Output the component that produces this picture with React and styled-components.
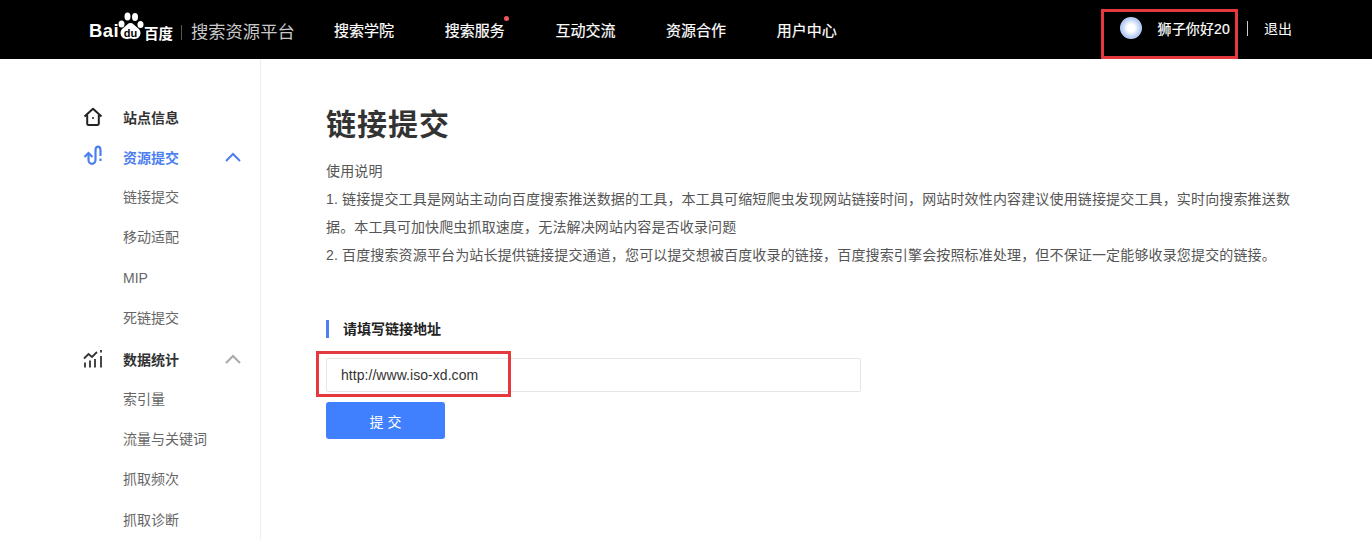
import React from 'react';
import styled, { createGlobalStyle } from 'styled-components';

const CJK = `"Liberation Sans", "Noto Sans CJK SC", sans-serif`;

const navItems = [
  { label: '搜索学院' },
  { label: '搜索服务', dot: true },
  { label: '互动交流' },
  { label: '资源合作' },
  { label: '用户中心' },
];

const App = () => {
  return (
    <>
      <GlobalStyle />
      <Header>
        <Logo>
          <LogoBai>Bai</LogoBai>
          <PawIcon />
          <LogoBaidu>百度</LogoBaidu>
          <LogoLine />
          <LogoTitle>搜索资源平台</LogoTitle>
        </Logo>
        <Nav>
          {navItems.map((item) => (
            <NavItem key={item.label}>
              {item.label}
              {item.dot && <NavDot />}
            </NavItem>
          ))}
        </Nav>
        <UserArea>
          <Marked $inset="-8px -8px -20px -19px">
            <Avatar />
            <UserName>狮子你好20</UserName>
          </Marked>
          <Divider />
          <Logout>退出</Logout>
        </UserArea>
      </Header>
      <Body>
        <Sidebar>
          <MenuHead>
            <MenuIcon><HomeIcon /></MenuIcon>
            站点信息
          </MenuHead>
          <MenuHead $active>
            <MenuIcon><SubmitIcon /></MenuIcon>
            资源提交
            <Chevron $color="#4e7ff0" />
          </MenuHead>
          <MenuItem>链接提交</MenuItem>
          <MenuItem>移动适配</MenuItem>
          <MenuItem>MIP</MenuItem>
          <MenuItem>死链提交</MenuItem>
          <MenuHead>
            <MenuIcon><StatsIcon /></MenuIcon>
            数据统计
            <Chevron $color="#aaa" />
          </MenuHead>
          <MenuItem>索引量</MenuItem>
          <MenuItem>流量与关键词</MenuItem>
          <MenuItem>抓取频次</MenuItem>
          <MenuItem>抓取诊断</MenuItem>
        </Sidebar>
        <Main>
          <Title>链接提交</Title>
          <Notes>
            <p>使用说明</p>
            <p>1. 链接提交工具是网站主动向百度搜索推送数据的工具，本工具可缩短爬虫发现网站链接时间，网站时效性内容建议使用链接提交工具，实时向搜索推送数据。本工具可加快爬虫抓取速度，无法解决网站内容是否收录问题</p>
            <p>2. 百度搜索资源平台为站长提供链接提交通道，您可以提交想被百度收录的链接，百度搜索引擎会按照标准处理，但不保证一定能够收录您提交的链接。</p>
          </Notes>
          <SectionTitle>请填写链接地址</SectionTitle>
          <InputRow $inset="-7px auto -5px -10px" $width="195px">
            <InputBox>
              <InputText>http://www.iso-xd.com</InputText>
            </InputBox>
          </InputRow>
          <SubmitButton>提 交</SubmitButton>
        </Main>
      </Body>
    </>
  );
};

export default App;

const PawIcon = () => (
  <PawSvg width="27" height="28" viewBox="0 0 27 28" fill="#fff">
    <ellipse cx="4.500" cy="12" rx="3" ry="3.600" />
    <ellipse cx="10.500" cy="4.500" rx="3" ry="4" />
    <ellipse cx="18" cy="5" rx="3" ry="4" />
    <ellipse cx="23.500" cy="12.500" rx="3" ry="3.600" />
    <path d="M13.500 11c-2.500 0-3.500 2-5.500 3.500-2.500 1.800-4.500 3.700-4.500 6.500 0 3 2.500 6 6 6 1.800 0 2.500-.5 4-.5s2.200.5 4 .5c3.500 0 6-3 6-6 0-2.800-2-4.700-4.500-6.500-2-1.500-3-3.500-5.500-3.500z" />
    <PawText x="13.500" y="24.500" textAnchor="middle">du</PawText>
  </PawSvg>
);

const HomeIcon = () => (
  <svg width="20" height="20" viewBox="0 0 20 20" fill="none" stroke="#222" strokeWidth="2">
    <path d="M1.500 9.500 10 1.800l8.500 7.700" strokeLinejoin="round" />
    <path d="M4.200 8v8.500a1.500 1.500 0 0 0 1.500 1.500h8.600a1.500 1.500 0 0 0 1.500-1.500V8" />
    <path d="M9 11h2" strokeWidth="1.600" />
  </svg>
);

const SubmitIcon = () => (
  <ShiftedSvg width="20" height="20" viewBox="0 0 20 20" fill="none" stroke="#4e7ff0" strokeWidth="2.200">
    <path d="M1.500 12 5.500 8l4 4" />
    <path d="M5.500 8.500v6.500a3.500 3.800 0 0 0 7 0V5.500a2.500 3.800 0 0 1 5 0v5.500" />
    <path d="M17.500 13.500v2.500" />
  </ShiftedSvg>
);

const StatsIcon = () => (
  <svg width="20" height="20" viewBox="0 0 20 20" fill="none" stroke="#333" strokeWidth="1.800">
    <path d="M1 9.500 5.500 5l3.500 3L14 3" />
    <path d="M2 13.500v5M7 11.500v7M12 10v8.500M18 7v11.500" />
    <path d="M18 1v2.500" />
  </svg>
);

const Chevron = ({ $color }) => (
  <ChevronSvg width="16" height="10" viewBox="0 0 16 10" fill="none" stroke={$color} strokeWidth="2">
    <path d="M1 9 8 2l7 7" />
  </ChevronSvg>
);

const GlobalStyle = createGlobalStyle`
  html, body {
    margin: 0;
    padding: 0;
    height: 540px;
    overflow: hidden;
    background: #fff;
    font-family: ${CJK};
  }
  * {
    box-sizing: border-box;
  }
`;

const Header = styled.header`
  display: flex;
  align-items: center;
  height: 59px;
  padding: 0 80px 0 89px;
  background: #000;
  color: #fff;
`;

const Logo = styled.div`
  display: flex;
  align-items: center;
  width: 245px;
  margin-bottom: 1px;
`;

const LogoBai = styled.span`
  width: 28px;
  font-size: 18.500px;
  letter-spacing: 0.400px;
  font-weight: 700;
  margin-top: 4px;
`;

const PawSvg = styled.svg`
  margin-bottom: 6px;
`;

const PawText = styled.text`
  font-size: 11px;
  font-weight: 700;
  fill: #000;
  font-family: "Liberation Sans", sans-serif;
`;

const LogoBaidu = styled.span`
  font-size: 14.500px;
  font-weight: 700;
  margin-top: 6px;
`;

const LogoLine = styled.span`
  width: 1px;
  height: 15px;
  margin: 6px 9px 0 8px;
  background: #555;
`;

const LogoTitle = styled.span`
  font-size: 17.300px;
  margin-top: 2px;
  color: #c8c8c8;
`;

const Nav = styled.nav`
  display: flex;
  gap: 50.700px;
`;

const NavItem = styled.a`
  position: relative;
  font-size: 15px;
  line-height: 20px;
  margin-top: 2px;
  -webkit-text-stroke: 0.200px #fff;
`;

const NavDot = styled.span`
  position: absolute;
  top: -5px;
  right: -4px;
  width: 5px;
  height: 5px;
  border-radius: 50%;
  background: #f0565c;
`;

const UserArea = styled.div`
  display: flex;
  align-items: center;
  margin-left: auto;
  margin-bottom: 4px;
  font-size: 14px;
`;

const Marked = styled.div`
  position: relative;
  display: flex;
  align-items: center;

  &::after {
    content: '';
    box-sizing: border-box;
    position: absolute;
    inset: ${(p) => p.$inset};
    width: ${(p) => p.$width || 'auto'};
    border: 3px solid #e5383f;
    pointer-events: none;
  }
`;

const InputRow = styled(Marked)`
  margin-top: 20px;
`;

const Avatar = styled.span`
  width: 22px;
  height: 22px;
  border-radius: 50%;
  background: radial-gradient(circle at 50% 50%, #fff 0 24%, #b7cdf5 60%, #a9c2f0 100%);
`;

const UserName = styled.span`
  margin-left: 16px;
  letter-spacing: 0.150px;
  -webkit-text-stroke: 0.200px #fff;
`;

const Divider = styled.span`
  width: 1px;
  height: 15px;
  margin: 2px 16px 0 17px;
  background: #ccc;
`;

const Logout = styled.a`
  font-size: 14px;
`;

const Body = styled.div`
  display: flex;
  height: 481px;
  overflow: hidden;
`;

const Sidebar = styled.aside`
  width: 261px;
  flex-shrink: 0;
  padding: 38px 0 0 83px;
  border-right: 1px solid #eceff3;
`;

const MenuHead = styled.div`
  display: flex;
  align-items: center;
  height: 40px;
  font-size: 14px;
  font-weight: 700;
  color: ${(p) => (p.$active ? '#4e7ff0' : '#333')};
`;

const MenuIcon = styled.span`
  display: flex;
  width: 40px;
`;

const ShiftedSvg = styled.svg`
  margin-top: -4px;
`;

const ChevronSvg = styled.svg`
  margin-left: 46px;
`;

const MenuItem = styled.div`
  height: 40.400px;
  line-height: 40px;
  padding-left: 40px;
  font-size: 14px;
  color: #666;
`;

const Main = styled.main`
  flex: 1;
  padding: 0 80px 0 65px;
`;

const Title = styled.h1`
  margin: 46px 0 0;
  font-size: 30px;
  line-height: 40px;
  letter-spacing: 1px;
  font-weight: 700;
  color: #333;
`;

const Notes = styled.div`
  margin-top: 12px;
  font-size: 14px;
  line-height: 28px;
  letter-spacing: 0.150px;
  color: #555;

  p {
    margin: 0;
  }
`;

const SectionTitle = styled.h2`
  margin: 51px 0 0;
  padding-left: 14px;
  border-left: 3px solid #4e7ff0;
  font-size: 14px;
  line-height: 18px;
  font-weight: 700;
  color: #222;
`;

const InputBox = styled.div`
  display: flex;
  align-items: center;
  width: 535px;
  height: 34px;
  padding-left: 14px;
  border: 1px solid #e6e6e6;
  border-radius: 2px;
`;

const InputText = styled.span`
  font-size: 14px;
  letter-spacing: 0.050px;
  color: #333;
`;

const SubmitButton = styled.button`
  display: block;
  width: 119px;
  height: 37px;
  margin-top: 10px;
  border: 0;
  border-radius: 3px;
  background: #4080ff;
  color: #fff;
  font-family: ${CJK};
  font-size: 14px;
`;
